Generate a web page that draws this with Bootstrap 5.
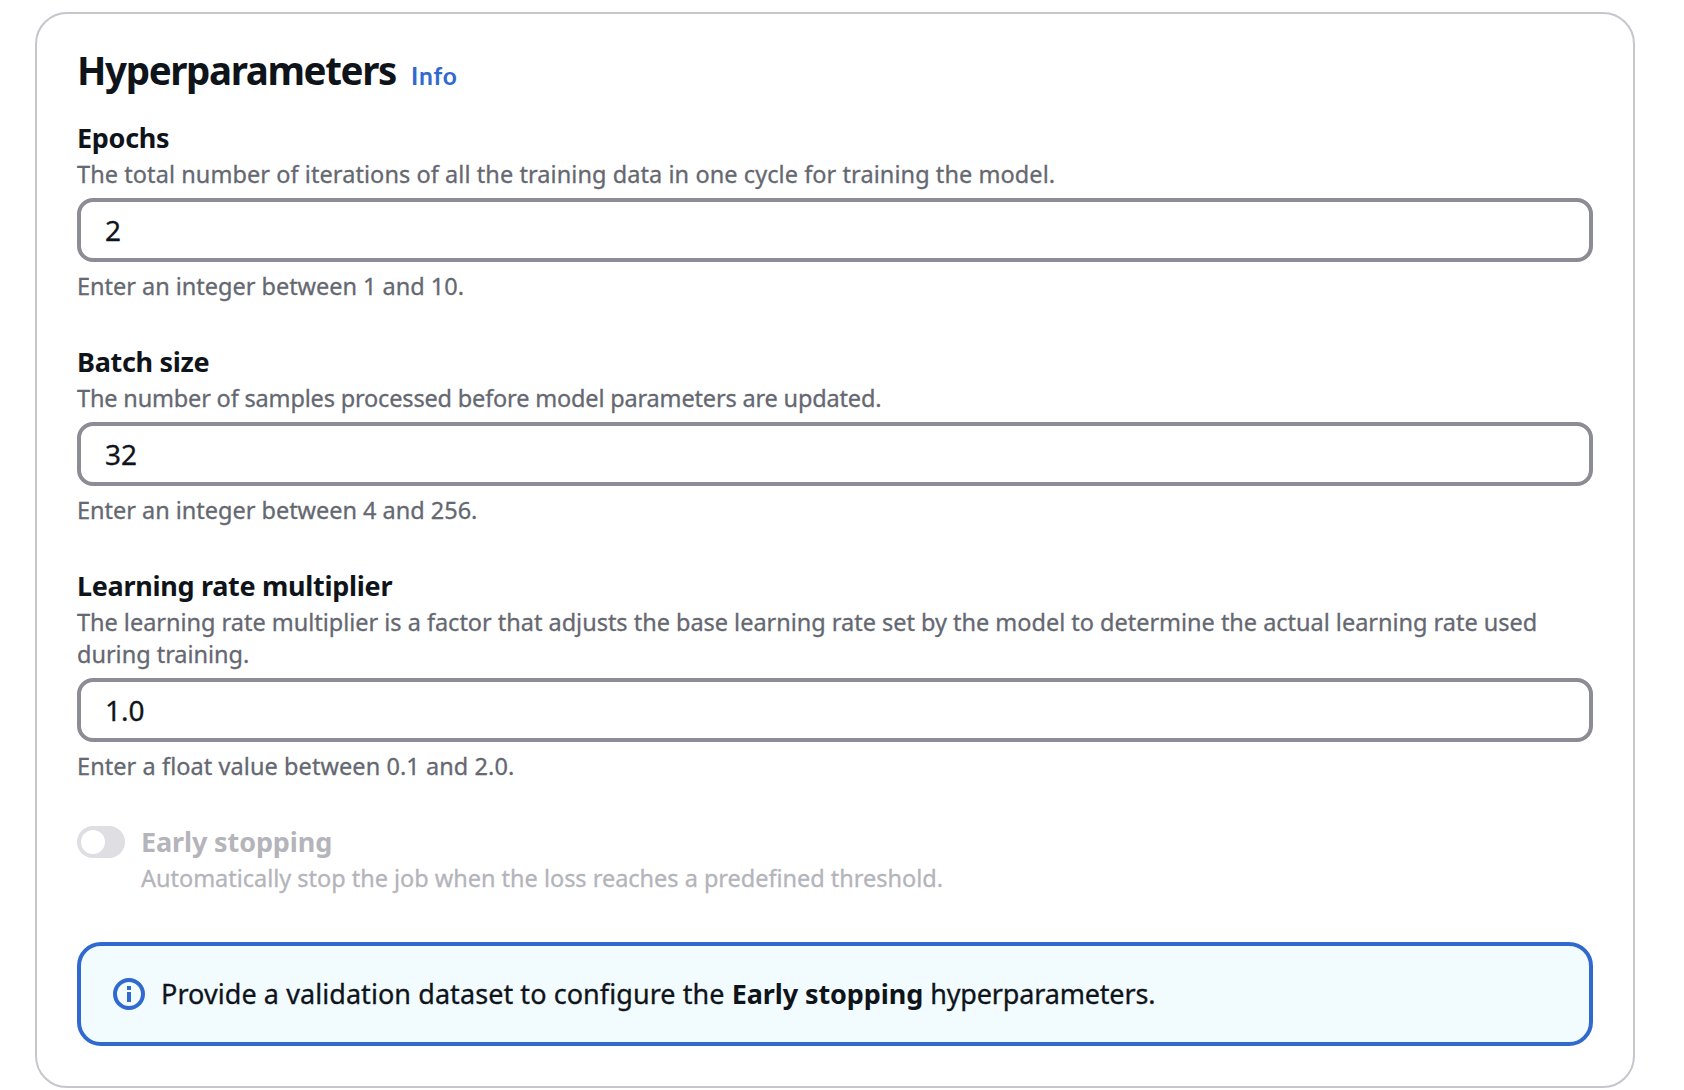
<!DOCTYPE html>
<html lang="en">
<head>
    <meta charset="UTF-8">
    <meta name="viewport" content="width=device-width, initial-scale=1.0">
    <title>Hyperparameters</title>
    <!-- Bootstrap CSS -->
    <link 
        href="https://cdn.jsdelivr.net/npm/bootstrap@5.3.2/dist/css/bootstrap.min.css" 
        rel="stylesheet">
    <style>
        body {
            padding: 12px 49px 0 35px;
            background-color: #fff;
            color: #0f141a;
            font-family: "Noto Sans", "Open Sans", sans-serif;
            font-size: 27px;
        }
        .params-card {
            padding: 32px 40px 40px;
            border: 2px solid #c6c6cd;
            border-radius: 32px;
        }
        .params-card h1 {
            font-size: 38.5px;
            font-weight: 700;
            line-height: 48px;
            letter-spacing: -1.38px;
        }
        .info-link {
            margin-left: 15px;
            color: #306acf;
            font: 700 24.5px Lato, sans-serif;
            letter-spacing: .9px;
        }
        .fields {
            gap: 40px;
        }
        .form-label {
            font-weight: 700;
            line-height: 40px;
            letter-spacing: -.3px;
        }
        .hint {
            color: #656871;
            font-size: 23.5px;
            line-height: 32px;
            letter-spacing: -.02px;
            -webkit-text-stroke: .3px;
        }
        .params-card .form-control {
            height: 64px;
            margin: 8px 0;
            padding: 0 24px;
            border: 4px solid #8c8c94;
            border-radius: 16px;
            color: #0f141a;
            font-size: 28px;
            -webkit-text-stroke: .3px;
        }
        .stop-toggle {
            gap: 16px;
            color: #b4b4bb;
        }
        .stop-toggle .hint {
            color: #b4b4bb;
        }
        .stop-toggle .form-check-input {
            width: 48px;
            height: 32px;
            margin: 4px 0 0;
            border: 0;
            opacity: 1;
            background-color: #dedee3;
            background-image: url("data:image/svg+xml,%3csvg xmlns='http://www.w3.org/2000/svg' viewBox='0 0 48 32'%3e%3ccircle cx='16' cy='16' r='12' fill='%23fff'/%3e%3c/svg%3e");
            background-size: 48px 32px;
        }
        .stop-toggle .form-label {
            opacity: 1;
            letter-spacing: -.12px;
        }
        .info-alert {
            height: 104px;
            margin-top: 8px;
            padding: 0 32px;
            gap: 16px;
            border: 4px solid #306acf;
            border-radius: 24px;
            background-color: #f2fbfe;
            color: #0f141a;
            letter-spacing: .07px;
            -webkit-text-stroke: .3px;
        }
        .info-alert b {
            letter-spacing: -.1px;
            -webkit-text-stroke: 0;
        }
        .snug {
            letter-spacing: -.17px;
        }
        .airy {
            letter-spacing: .07px;
        }
    </style>
</head>
<body>
    <main class="params-card">
        <div class="d-flex align-items-baseline mb-4">
            <h1 class="m-0">Hyperparameters</h1>
            <a href="#" class="info-link text-decoration-none">Info</a>
        </div>

        <form class="fields d-flex flex-column">
            <div>
                <label for="epochs" class="form-label d-block m-0">Epochs</label>
                <div class="hint airy">The total number of iterations of all the training data in one cycle for training the model.</div>
                <input type="text" class="form-control" id="epochs" value="2">
                <div class="hint">Enter an integer between 1 and 10.</div>
            </div>
            <div>
                <label for="batchSize" class="form-label d-block m-0">Batch size</label>
                <div class="hint snug">The number of samples processed before model parameters are updated.</div>
                <input type="text" class="form-control" id="batchSize" value="32">
                <div class="hint">Enter an integer between 4 and 256.</div>
            </div>
            <div>
                <label for="learningRate" class="form-label d-block m-0">Learning rate multiplier</label>
                <div class="hint">The learning rate multiplier is a factor that adjusts the base learning rate set by the model to determine the actual learning rate used during training.</div>
                <input type="text" class="form-control" id="learningRate" value="1.0">
                <div class="hint airy">Enter a float value between 0.1 and 2.0.</div>
            </div>

            <!-- Early stopping -->
            <div class="stop-toggle form-switch d-flex p-0">
                <input type="checkbox" class="form-check-input flex-shrink-0" role="switch" id="earlyStopping" disabled>
                <div>
                    <label for="earlyStopping" class="form-label d-block m-0">Early stopping</label>
                    <div class="hint">Automatically stop the job when the loss reaches a predefined threshold.</div>
                </div>
            </div>

            <div class="info-alert alert d-flex align-items-center mb-0" role="alert">
                <svg width="32" height="32" viewBox="0 0 32 32" fill="none" stroke="#306acf" stroke-width="4" class="flex-shrink-0">
                    <circle cx="16" cy="16" r="14"/>
                    <path d="M16 8v4M16 14v10"/>
                </svg>
                <div>Provide a validation dataset to configure the <b>Early stopping</b> <span class="snug">hyperparameters.</span></div>
            </div>
        </form>
    </main>

    <script src="https://cdn.jsdelivr.net/npm/bootstrap@5.3.2/dist/js/bootstrap.bundle.min.js"></script>
</body>
</html>
